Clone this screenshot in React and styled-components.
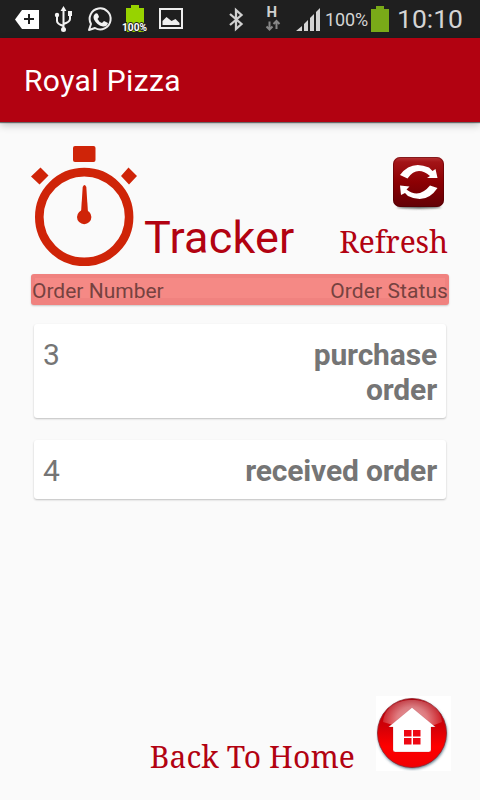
import React from 'react';
import styled, { createGlobalStyle } from 'styled-components';

const GlobalStyle = createGlobalStyle`
  * { box-sizing: border-box; }
  body { margin: 0; background: #fafafa; font-family: Roboto, sans-serif; }
  svg { display: block; flex: none; }
`;

const Screen = styled.div`
  width: 480px;
  height: 800px;
  display: flex;
  flex-direction: column;
  overflow: hidden;
  background: #fafafa;
`;

const StatusBar = styled.div`
  height: 38px;
  flex: none;
  display: flex;
  background: #1f1f1f;
  color: #d4d4d4;
`;

const StatusText = styled.span`
  font-size: ${(p) => p.$size}px;
  line-height: ${(p) => p.$line || 38}px;
  letter-spacing: ${(p) => p.$spacing || 0}px;
  margin-left: ${(p) => p.$left || 0}px;
  white-space: nowrap;
`;

const SystemText = styled.div`
  display: flex;
  width: 155px;
`;

const PercentSlot = styled.div`
  width: 45px;
  flex: none;
`;

const AppBar = styled.header`
  height: 84px;
  flex: none;
  display: flex;
  align-items: center;
  padding: 2px 24px 0;
  background: #b20211;
  box-shadow: 0 1px 1px rgba(0, 0, 0, 0.5), 0 3px 8px rgba(0, 0, 0, 0.24);
`;

const Title = styled.h1`
  margin: 0;
  color: #fff;
  font-size: 30px;
  line-height: 36px;
  font-weight: 400;
  letter-spacing: 0.38px;
`;

const Content = styled.main`
  flex: 1;
  display: flex;
  flex-direction: column;
  padding: 24px 31px 29px;
`;

const Hero = styled.section`
  height: 120px;
  display: flex;
  justify-content: space-between;
`;

const Brand = styled.div`
  display: flex;
  align-items: flex-end;
`;

const Heading = styled.h2`
  margin: 0 0 -1px 5px;
  color: #b20211;
  font-size: 45px;
  line-height: 58px;
  font-weight: 400;
  letter-spacing: 0.2px;
  white-space: nowrap;
`;

const RefreshButton = styled.div`
  display: flex;
  flex-direction: column;
  align-items: flex-end;
  padding: 9px 1px 0 0;
`;

const SerifLabel = styled.span`
  color: #b20211;
  font-family: "Noto Serif", "Droid Serif", "DejaVu Serif Condensed", "DejaVu Serif", serif;
  font-stretch: condensed;
  font-size: 30px;
  line-height: 40px;
  letter-spacing: ${(p) => p.$spacing || 0}px;
  margin: ${(p) => p.$margin || 0};
  white-space: nowrap;
`;

const TableHead = styled.div`
  height: 31px;
  margin-top: 8px;
  padding: 0 1px;
  display: flex;
  justify-content: space-between;
  border-radius: 3px;
  background: #f58985;
  border: solid #f0827f;
  border-width: 4px 4px 7px;
  box-shadow: 0 1px 2px rgba(0, 0, 0, 0.2);
`;

const HeadCell = styled.span`
  color: #764240;
  font-size: 21px;
  line-height: 26px;
  margin: 0 -4px;
  letter-spacing: ${(p) => p.$spacing || 0}px;
`;

const Orders = styled.div`
  display: flex;
  flex-direction: column;
  gap: 22px;
  padding: 19px 3px 0;
`;

const OrderCard = styled.article`
  display: flex;
  justify-content: space-between;
  padding: 13px 9px 11px;
  background: #fff;
  border-radius: 3px;
  box-shadow: 0 1px 2px rgba(0, 0, 0, 0.24);
  color: #757575;
  font-size: 30px;
  line-height: 35px;
`;

const OrderStatus = styled.strong`
  width: 200px;
  text-align: right;
  letter-spacing: -0.15px;
`;

const Footer = styled.footer`
  margin-top: auto;
  margin-right: -2px;
  display: flex;
  justify-content: flex-end;
  align-items: flex-end;
`;

const StatusIcons = () => (
  <svg width="325" height="38" viewBox="0 0 325 38">
    <path d="M15 19.500 22 10h17v19H22Z" fill="#fff" />
    <path d="M24 19h10m-5-5v10" stroke="#1f1f1f" strokeWidth="2" />
    <g stroke="#f3f3f3" strokeWidth="2" fill="none">
      <path d="M63.500 9v20M57 16v5q0 3 6.500 5M70 14v5q0 3-6.500 5" />
    </g>
    <path d="m63.500 6 3 5h-6ZM68 11h4v5h-4Z" fill="#f3f3f3" />
    <circle cx="57" cy="15" r="2.200" fill="#f3f3f3" />
    <circle cx="63.500" cy="29.500" r="2.500" fill="#f3f3f3" />
    <path d="M89 30l2-6A10.500 10.500 0 1 1 95 28Z" fill="none" stroke="#eee" strokeWidth="2" strokeLinejoin="round" />
    <path d="M95.500 13.500q2-1 3 2l.5 1.500-1.500 2q1.500 3 4.500 4l2-2 4 2q-1 4-5 3.500-6-1-9-7-1.500-4 1.500-6Z" fill="#f3f3f3" />
    <path d="M126 8h5V5h8v3h5v24h-18Z" fill="#97d300" />
    <text x="134.500" y="31" textAnchor="middle" textLength="25" lengthAdjust="spacingAndGlyphs" fontSize="11" fontWeight="700" fill="#fff" stroke="#1f1f1f" strokeWidth="2" paintOrder="stroke">100%</text>
    <path d="M160 9h22v19h-22Z" fill="none" stroke="#eee" strokeWidth="2" />
    <path d="M162.500 25v-4l4-4 5 4 4-2 4 4v2Z" fill="#eee" />
    <path d="m230 14 11.500 10-5.500 5V10l5.500 5L230 25" fill="none" stroke="#d0d0d0" strokeWidth="2.300" />
    <text x="266.500" y="17" fontSize="15" fontWeight="700" fill="#cfcfcf">H</text>
    <path d="M269.500 21.500v8m-3-3 3 3 3-3M276.500 29v-8m-3 3 3-3 3 3" fill="none" stroke="#888" strokeWidth="2" />
    <path d="M296 31l6-5v5ZM304 24l4-4v11h-4ZM310 18l4-4v17h-4ZM316 12l4-4v23h-4Z" fill="#d4d4d4" />
  </svg>
);

const BatteryIcon = () => (
  <svg width="20" height="38" viewBox="0 0 20 38">
    <path d="M1 9h5V6h8v3h5v23H1Z" fill="#7aaa18" />
  </svg>
);

const StopwatchIcon = () => (
  <svg width="108" height="120" viewBox="0 0 108 120" fill="#cf2408">
    <rect x="42" y="0" width="22.500" height="16" rx="2" />
    <path d="m9.500 21.500 8 8-9 9L0 30.500ZM97.500 21.500 106 30l-8 8.500-8-8.500Z" />
    <circle cx="53.200" cy="71" r="44.900" fill="none" stroke="#cf2408" strokeWidth="8.600" />
    <circle cx="53.200" cy="71" r="7.200" />
    <path d="m50 67 1.700-26q1.800-4 3.600 0L57 67Z" />
  </svg>
);

const RefreshIcon = () => (
  <svg width="56" height="58" viewBox="0 0 56 58">
    <defs>
      <linearGradient id="tile" x2="0" y2="1">
        <stop stopColor="#b83435" />
        <stop offset=".1" stopColor="#a31417" />
        <stop offset=".5" stopColor="#8c0003" />
        <stop offset="1" stopColor="#620006" />
      </linearGradient>
      <filter id="soft" x="-20%" y="-80%" width="140%" height="260%"><feGaussianBlur stdDeviation="1.200" /></filter>
    </defs>
    <ellipse cx="27" cy="52" rx="22" ry="1.500" fill="#444" filter="url(#soft)" />
    <rect x="1" y="2" width="51" height="50" rx="7" fill="url(#tile)" />
    <rect x="1.500" y="2.500" width="50" height="49" rx="7" fill="none" stroke="#450005" strokeOpacity=".45" />
    <path d="M8 20Q19 5 37 12.500L40.500 16l3-2L45.500 23H35l3-2Q25 10 15.500 23.500ZM45.500 33Q34 50 16 41l-3-3-4 2L8 30.500l9.500 1-3 3Q27 44 38 30.500Z" fill="#fff" />
  </svg>
);

const HomeIcon = () => (
  <svg width="75" height="75" viewBox="0 0 75 75">
    <defs>
      <linearGradient id="ball" x2="0" y2="1">
        <stop stopColor="#ab000b" />
        <stop offset=".4" stopColor="#d10007" />
        <stop offset=".7" stopColor="#ff0000" />
        <stop offset="1" stopColor="#f00003" />
      </linearGradient>
      <radialGradient id="gloss" gradientUnits="userSpaceOnUse" cx="36" cy="24" r="31" gradientTransform="matrix(1 0 0 .85 0 3.600)">
        <stop stopColor="#fff" stopOpacity=".65" />
        <stop offset=".5" stopColor="#fff" stopOpacity=".48" />
        <stop offset="1" stopColor="#fff" stopOpacity=".1" />
      </radialGradient>
      <filter id="glow" x="-20%" y="-20%" width="140%" height="140%"><feGaussianBlur stdDeviation="1.800" /></filter>
    </defs>
    <rect width="75" height="75" fill="#fff" />
    <circle cx="36.500" cy="38.500" r="34.500" fill="#3f6478" opacity=".9" filter="url(#glow)" />
    <circle cx="36" cy="37" r="34.500" fill="url(#ball)" stroke="#94222b" strokeWidth=".8" />
    <path d="M7 26C8 12 20 4 36 4s29 8 30 22Q50 33 36 32T7 26Z" fill="url(#gloss)" />
    <path d="M36 11.500 59.500 31H55v22.500q0 2.500-2.500 2.500h-33Q17 56 17 53.500V31h-4.500Z" fill="#fff" stroke="#9e1520" strokeOpacity=".35" strokeWidth=".6" />
    <path d="M28 34h7.500v6.500H28ZM37 34h7.500v6.500H37ZM28 42h7.500v6.500H28ZM37 42h7.500v6.500H37Z" fill="#ee0712" />
  </svg>
);

const orders = [
  { number: 3, status: 'purchase order' },
  { number: 4, status: 'received order' },
];

export default function App() {
  return (
    <Screen>
      <GlobalStyle />
      <StatusBar>
        <StatusIcons />
        <SystemText>
          <PercentSlot>
            <StatusText $size={18} $line={40} $spacing={-0.1}>100%</StatusText>
          </PercentSlot>
          <BatteryIcon />
          <StatusText $size={26.500} $left={7}>10:10</StatusText>
        </SystemText>
      </StatusBar>
      <AppBar>
        <Title>Royal Pizza</Title>
      </AppBar>
      <Content>
        <Hero>
          <Brand>
            <StopwatchIcon />
            <Heading>Tracker</Heading>
          </Brand>
          <RefreshButton>
            <RefreshIcon />
            <SerifLabel $margin="9px 0 0" $spacing={-0.1}>Refresh</SerifLabel>
          </RefreshButton>
        </Hero>
        <TableHead>
          <HeadCell>Order Number</HeadCell>
          <HeadCell $spacing={0.08}>Order Status</HeadCell>
        </TableHead>
        <Orders>
          {orders.map((order) => (
            <OrderCard key={order.number}>
              <span>{order.number}</span>
              <OrderStatus>{order.status}</OrderStatus>
            </OrderCard>
          ))}
        </Orders>
        <Footer>
          <SerifLabel $margin="0 21px -6px 0" $spacing={0.1}>Back To Home</SerifLabel>
          <HomeIcon />
        </Footer>
      </Content>
    </Screen>
  );
}
